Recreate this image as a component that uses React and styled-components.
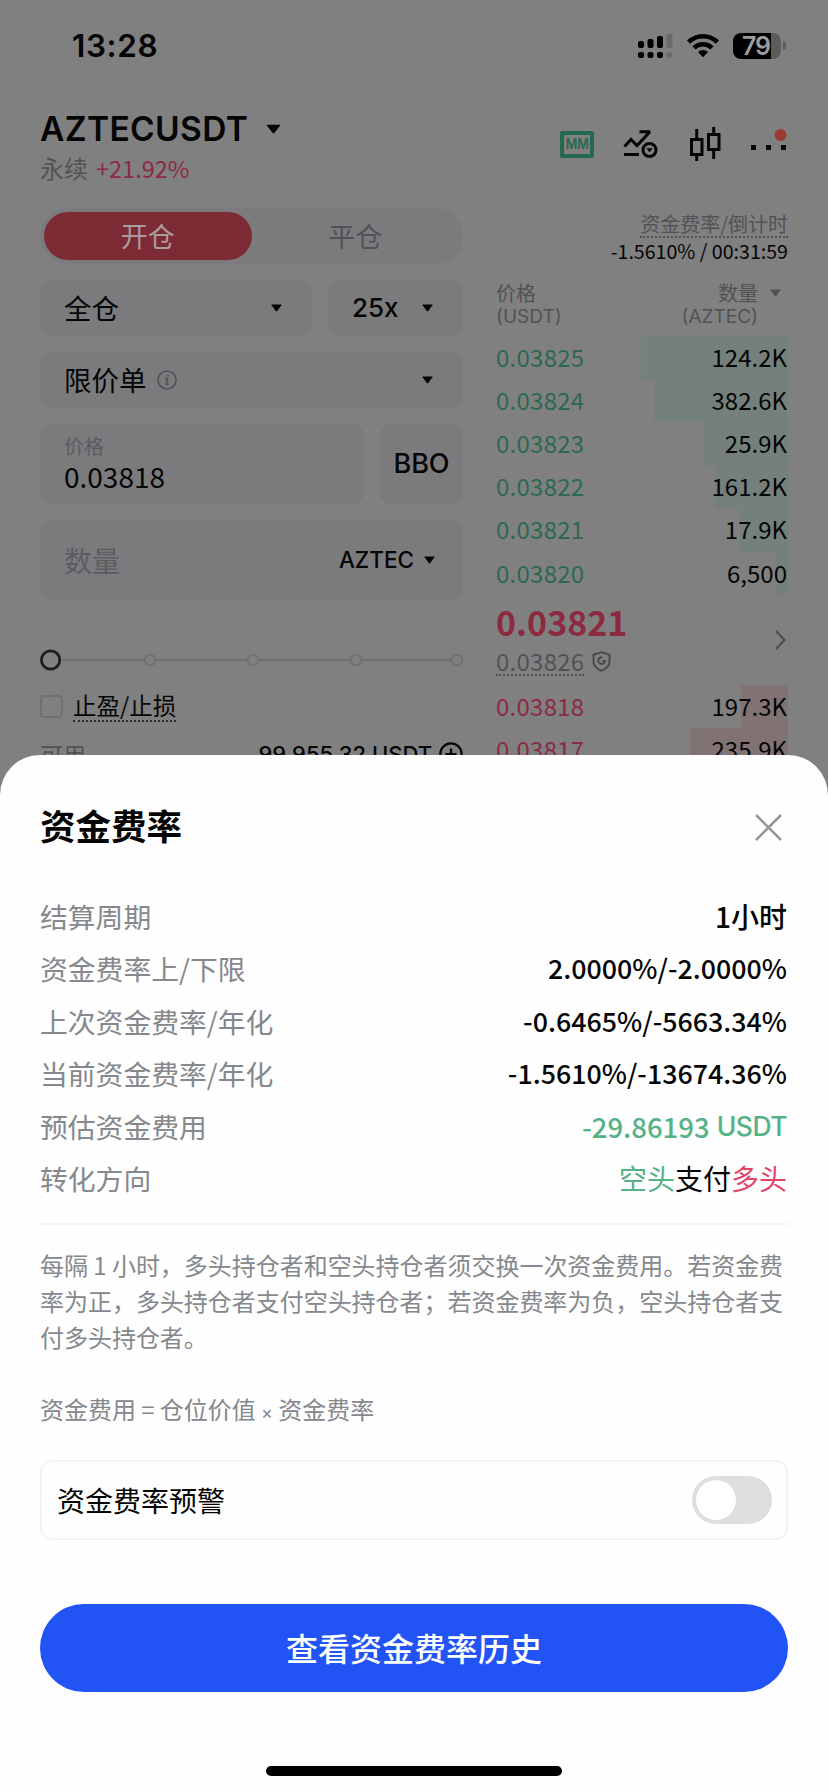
import React from 'react';
import styled, { createGlobalStyle } from 'styled-components';

const c = {
  bg: '#808080',
  field: '#7b7b7e',
  ink: '#050505',
  muted: '#505356',
  faint: '#5a5d60',
  line: '#717171',
  green: '#2c6950',
  red: '#8c2a42',
  buyBar: '#75807c',
  sellBar: '#817274',
  label: '#85888c',
};

const cjk = '"Noto Sans CJK SC", sans-serif';
const latin = 'Inter, "Noto Sans CJK SC", sans-serif';

const Global = createGlobalStyle`
  * { box-sizing: border-box; }
  body { margin: 0; background: ${c.bg}; font-family: ${cjk}; color: ${c.ink}; }
  svg { display: block; flex: none; }
`;

const Screen = styled.div`
  position: relative;
  width: 828px;
  height: 1792px;
  overflow: hidden;
  background: ${c.bg};
`;

const Text = styled.span`
  margin-top: ${(p) => -(p.$up || 0)}px;
  font-family: ${(p) => (p.$latin ? latin : cjk)};
  font-size: ${(p) => p.$size || 24}px;
  line-height: ${(p) => p.$lh || 30}px;
  font-weight: ${(p) => p.$weight || 400};
  color: ${(p) => p.$color || c.ink};
  letter-spacing: ${(p) => p.$track || 0}px;
  white-space: nowrap;
`;

const Row = styled.div`
  display: flex;
  align-items: center;
  justify-content: ${(p) => (p.$between ? 'space-between' : 'flex-start')};
  gap: ${(p) => p.$gap || 0}px;
`;

const StatusBar = styled.div`
  display: flex;
  align-items: center;
  justify-content: space-between;
  height: 91px;
  padding: 0 42px 0 72px;
`;

const StatusIcons = styled.div`
  display: flex;
  align-items: center;
  gap: 14px;
`;

const Header = styled.header`
  display: flex;
  justify-content: space-between;
  height: 117px;
  padding: 18px 40px 0;
`;

const Pair = styled.div`
  display: flex;
  flex-direction: column;
  gap: 3px;
`;

const Tools = styled.div`
  display: flex;
  align-items: center;
  height: 70px;
`;

const Tool = styled.div`
  margin-left: ${(p) => p.$left || 0}px;
`;

const Trade = styled.main`
  display: grid;
  grid-template-columns: 423px 292px;
  column-gap: 33px;
  padding-left: 40px;
`;

const Form = styled.section`
  display: flex;
  flex-direction: column;
  gap: 16px;
`;

const Segment = styled.div`
  display: flex;
  height: 56px;
  padding: 4px;
  border-radius: 28px;
  background: ${c.field};
`;

const SegmentItem = styled.div`
  flex: 1;
  display: flex;
  align-items: center;
  justify-content: center;
  padding-bottom: 2px;
  border-radius: 24px;
  font-size: 27px;
  color: ${(p) => (p.$on ? '#ab9c9d' : c.muted)};
  background: ${(p) => (p.$on ? '#7c2b35' : 'transparent')};
`;

const Field = styled.div`
  display: flex;
  align-items: center;
  justify-content: ${(p) => (p.$center ? 'center' : 'space-between')};
  width: ${(p) => (p.$w ? `${p.$w}px` : 'auto')};
  height: ${(p) => p.$h || 56}px;
  padding: 0 ${(p) => (p.$center ? 0 : p.$right || 30)}px 0 ${(p) => (p.$center ? 0 : 24)}px;
  border-radius: 10px;
  background: ${c.field};
`;

const Stack = styled.div`
  display: flex;
  flex-direction: column;
  gap: ${(p) => p.$gap || 0}px;
  padding-bottom: ${(p) => p.$bottom || 0}px;
  align-items: ${(p) => (p.$end ? 'flex-end' : 'flex-start')};
`;

const SliderRow = styled.div`
  height: 24px;
  margin-top: 32px;
`;

const Options = styled.div`
  display: flex;
  flex-direction: column;
  gap: 17px;
  margin-top: 2px;
`;

const Checkbox = styled.span`
  width: 23px;
  height: 23px;
  border: 2px solid #707070;
  border-radius: 4px;
`;

const Dotted = styled(Text)`
  border-bottom: 2px dotted ${(p) => p.$color || '#2c2c2c'};
`;

const Book = styled.section`
  display: flex;
  flex-direction: column;
`;

const Funding = styled.div`
  display: flex;
  flex-direction: column;
  align-items: flex-end;
  height: 72px;
  padding-top: 4px;
`;

const BookHead = styled.div`
  display: flex;
  justify-content: space-between;
  align-items: flex-start;
  height: 56px;
  padding-right: 7px;
`;

const SizeHead = styled.div`
  display: grid;
  grid-template-columns: auto 11px;
  column-gap: 12px;
  align-items: center;
  justify-items: end;
`;

const Level = styled.div`
  display: flex;
  align-items: center;
  justify-content: space-between;
  height: 43.2px;
  padding: 0 1px 2px 0;
  background: linear-gradient(${(p) => p.$bar}, ${(p) => p.$bar}) right / ${(p) => p.$depth}px 100% no-repeat;
`;

const Mid = styled.div`
  display: flex;
  align-items: center;
  justify-content: space-between;
  height: 90px;
  padding-right: 2px;
`;

const Sheet = styled.section`
  position: absolute;
  left: 0;
  right: 0;
  bottom: 0;
  height: 1037px;
  padding: 48px 40px 0;
  border-radius: 40px 40px 0 0;
  background: #fefefe;
  display: flex;
  flex-direction: column;
`;

const SheetHead = styled.div`
  display: flex;
  align-items: center;
  justify-content: space-between;
  height: 48px;
  padding-right: 6px;
`;

const Details = styled.div`
  margin-top: 40px;
  padding: 0 1px 17px 0;
  border-bottom: 2px solid #f3f3f4;
`;

const Detail = styled.div`
  display: flex;
  align-items: center;
  justify-content: space-between;
  height: 52.5px;
  padding-bottom: 3px;
`;

const Note = styled.p`
  margin: ${(p) => p.$top}px 0 0;
  font-size: 24px;
  line-height: 36px;
  letter-spacing: -0.03px;
  color: ${c.label};
`;

const Times = styled.span`
  font: 400 18px/20px ${latin};
`;

const AlertCard = styled.div`
  display: flex;
  align-items: center;
  justify-content: space-between;
  height: 80px;
  margin-top: 33px;
  padding: 0 14px 0 15px;
  border: 2px solid #f3f3f4;
  border-radius: 12px;
`;

const Switch = styled.div`
  display: flex;
  align-items: center;
  width: 80px;
  height: 48px;
  padding: 4px;
  border-radius: 24px;
  background: #dcdee0;
`;

const Thumb = styled.span`
  width: 40px;
  height: 40px;
  border-radius: 50%;
  background: #fff;
`;

const Primary = styled.button`
  height: 88px;
  margin-top: 64px;
  padding: 0 0 3px;
  border: 0;
  border-radius: 44px;
  background: #2254f5;
  color: #fff;
  font: 500 32px/48px ${cjk};
`;

const HomeBar = styled.div`
  align-self: center;
  width: 296px;
  height: 10px;
  margin-top: 74px;
  border-radius: 5px;
  background: #000;
`;

const Caret = ({ w = 11, h = 8, color = c.ink }) => (
  <svg width={w} height={h} viewBox="0 0 11 8" preserveAspectRatio="none">
    <path d="M1 .5h9q.8 0 .4.7L6.2 7q-.7.8-1.4 0L.6 1.2Q.2.5 1 .5z" fill={color} />
  </svg>
);

const Signal = () => (
  <svg width="35" height="26" viewBox="0 0 35 26">
    {[[0, 8, 7], [9.5, 6, 9], [19, 3, 12], [28.5, 1, 14]].map(([x, y, h], i) => (
      <g key={x} fill={i === 3 ? '#6a6a6a' : '#000'}>
        <rect x={x} y={y} width="6" height={h} rx="2" />
        <rect x={x} y="19" width="6" height="6" rx={i === 3 ? 3 : 2} />
      </g>
    ))}
  </svg>
);

const Wifi = () => (
  <svg width="32" height="25" viewBox="0 0 32 25">
    <g fill="none" stroke="#000" strokeWidth="4.6">
      <path d="M1.6 9.2a20.5 20.5 0 0 1 28.8 0" />
      <path d="M7 14.9a12.8 12.8 0 0 1 18 0" />
    </g>
    <path d="M16 24.3l-5-5.2a7.3 7.3 0 0 1 10 0z" />
  </svg>
);

const BatteryBox = styled.div`
  display: flex;
  align-items: center;
  gap: 2px;
`;

const BatteryBody = styled.div`
  width: 48px;
  height: 26px;
  border-radius: 8px;
  padding-left: 9px;
  background: linear-gradient(90deg, #000 38.5px, #5c5c5c 38.5px);
  color: #9c9c9c;
  font: 600 25px/26px ${latin};
  letter-spacing: -1.2px;
`;

const BatteryNub = styled.span`
  width: 3px;
  height: 9px;
  border-radius: 0 3px 3px 0;
  background: #5c5c5c;
`;

const MakerBadge = styled.div`
  display: flex;
  align-items: center;
  justify-content: center;
  width: 34px;
  height: 27px;
  border: 4px solid #256a4e;
  border-radius: 2px;
  color: #256a4e;
  font: 600 14.5px/18px ${latin};
`;

const BadgeText = styled.span`
  transform: scaleX(0.86);
`;

const Trend = () => (
  <svg width="35" height="30" viewBox="0 0 35 30" fill="none" stroke="#050505" strokeWidth="3">
    <path d="M1.500 17.500l6.500-7 6 6L27 2.800M16.500 2.800h10.700M1 25.500h15" />
    <circle cx="26.500" cy="21" r="6.500" />
    <path d="M23.200 19.200h6.600l-3.300 4z" fill="#050505" stroke="none" />
  </svg>
);

const Candles = () => (
  <svg width="32" height="34" viewBox="0 0 32 34" fill="none" stroke="#050505" strokeWidth="3">
    <rect x="2.500" y="12.500" width="10.500" height="15" />
    <rect x="19.500" y="7.500" width="10.500" height="15" />
    <path d="M7.700 2v10M7.700 28v6M24.700 0v7M24.700 23v9" />
  </svg>
);

const More = () => (
  <svg width="38" height="34" viewBox="0 0 38 34">
    <path d="M1 18h5v5H1zM16 18h5v5h-5zM31 18h5v5h-5z" fill="#050505" />
    <circle cx="30.500" cy="8" r="6" fill="#993a30" />
  </svg>
);

const Info = () => (
  <svg width="20" height="20" viewBox="0 0 20 20" fill="none" stroke={c.muted} strokeWidth="1.600">
    <circle cx="10" cy="10" r="9" />
    <path d="M8 8.600h2.600L9.200 14.400h2.200" />
    <circle cx="11" cy="5.600" r=".7" fill={c.muted} stroke={c.muted} strokeWidth=".8" />
  </svg>
);

const Shield = () => (
  <svg width="19" height="21" viewBox="0 0 19 21" fill="none" stroke="#464a4e" strokeWidth="1.900">
    <path d="M9.500 1.200l8 2.600v7c0 4-3.500 7-8 9-4.500-2-8-5-8-9v-7z" />
    <path d="M10.200 6.300a3.300 3.300 0 1 0 2.700 3.600h-2.600" />
  </svg>
);

const Slider = () => (
  <svg width="423" height="24" viewBox="0 0 423 24">
    <path d="M22 12h390" stroke={c.line} strokeWidth="2.500" />
    {[110, 213, 316, 417].map((x) => (
      <circle key={x} cx={x} cy="12" r="5.300" fill="#808080" stroke={c.line} strokeWidth="2" />
    ))}
    <circle cx="10.600" cy="12" r="9.200" fill="#808080" stroke="#1c1c1c" strokeWidth="2.700" />
  </svg>
);

const PlusCircle = () => (
  <svg width="24" height="24" viewBox="0 0 24 24" fill="none" stroke="#050505" strokeWidth="2.200">
    <circle cx="12" cy="12" r="10.700" />
    <path d="M12 6.500v11M6.500 12h11" />
  </svg>
);

const Chevron = () => (
  <svg width="11" height="20" viewBox="0 0 11 20" fill="none" stroke="#4b4b4b" strokeWidth="2">
    <path d="M1 1l8.500 9L1 19" />
  </svg>
);

const Close = () => (
  <svg width="27" height="27" viewBox="0 0 27 27" fill="none" stroke="#969696" strokeWidth="2.500">
    <path d="M1 1l25 25M26 1L1 26" />
  </svg>
);

const bids = [
  ['0.03825', '124.2K', 147],
  ['0.03824', '382.6K', 134],
  ['0.03823', '25.9K', 84],
  ['0.03822', '161.2K', 73],
  ['0.03821', '17.9K', 48],
  ['0.03820', '6,500', 13],
];
const asks = [
  ['0.03818', '197.3K', 47],
  ['0.03817', '235.9K', 98],
];

const Levels = ({ rows, color, bar }) =>
  rows.map(([price, size, depth]) => (
    <Level key={price} $bar={bar} $depth={depth}>
      <Text $color={color} $track={0.25}>{price}</Text>
      <Text>{size}</Text>
    </Level>
  ));

const Value = ({ children, ...rest }) => (
  <Text $size={26.800} $lh={40} $weight={500} {...rest}>{children}</Text>
);

const details = [
  ['结算周期', <Value $size={28}>1小时</Value>],
  ['资金费率上/下限', <Value>2.0000%/-2.0000%</Value>],
  ['上次资金费率/年化', <Value>-0.6465%/-5663.34%</Value>],
  ['当前资金费率/年化', <Value>-1.5610%/-13674.36%</Value>],
  ['预估资金费用', (
    <Row $gap={7}>
      <Value $size={27.500} $color="#55b287">-29.86193</Value>
      <Value $latin $size={26.500} $color="#55b287" $track={-0.5}>USDT</Value>
    </Row>
  )],
  ['转化方向', (
    <Row>
      <Value $size={28} $weight={400} $color="#55b287">空头</Value>
      <Value $size={28} $weight={400}>支付</Value>
      <Value $size={28} $weight={400} $color="#e0456a">多头</Value>
    </Row>
  )],
];

export default function App() {
  return (
    <Screen>
      <Global />
      <StatusBar>
        <Text $latin $size={31.500} $weight={600} $lh={38} $track={0.600}>13:28</Text>
        <StatusIcons>
          <Signal />
          <Wifi />
          <BatteryBox>
            <BatteryBody>79</BatteryBody>
            <BatteryNub />
          </BatteryBox>
        </StatusIcons>
      </StatusBar>

      <Header>
        <Pair>
          <Row $gap={18}>
            <Text $latin $size={33.500} $weight={600} $lh={40} $track={0.350}>AZTECUSDT</Text>
            <Caret w={15} h={10} />
          </Row>
          <Row $gap={8}>
            <Text $color={c.muted} $lh={32}>永续</Text>
            <Text $color={c.red} $size={23.500} $lh={32}>+21.92%</Text>
          </Row>
        </Pair>
        <Tools>
          <MakerBadge><BadgeText>MM</BadgeText></MakerBadge>
          <Tool $left={29}><Trend /></Tool>
          <Tool $left={31}><Candles /></Tool>
          <Tool $left={29}><More /></Tool>
        </Tools>
      </Header>

      <Trade>
        <Form>
          <Segment>
            <SegmentItem $on>开仓</SegmentItem>
            <SegmentItem>平仓</SegmentItem>
          </Segment>
          <Row $gap={16}>
            <Field $w={272}>
              <Text $size={27.500} $up={3}>全仓</Text>
              <Caret />
            </Field>
            <Field $w={135}>
              <Text $latin $size={26} $weight={500}>25x</Text>
              <Caret />
            </Field>
          </Row>
          <Field>
            <Row $gap={10}>
              <Text $size={27.500} $up={3}>限价单</Text>
              <Info />
            </Row>
            <Caret />
          </Field>
          <Row $gap={16}>
            <Field $w={324} $h={80}>
              <Stack $bottom={2}>
                <Text $size={20} $color={c.faint} $lh={26}>价格</Text>
                <Text $size={28} $lh={34}>0.03818</Text>
              </Stack>
            </Field>
            <Field $w={83} $h={80} $center>
              <Text $latin $size={27} $weight={500}>BBO</Text>
            </Field>
          </Row>
          <Field $h={80} $right={28}>
            <Text $size={28} $color={c.faint} $up={1}>数量</Text>
            <Row $gap={10}>
              <Text $latin $size={22.500} $weight={500}>AZTEC</Text>
              <Caret />
            </Row>
          </Field>
          <SliderRow><Slider /></SliderRow>
          <Options>
            <Row $gap={10}>
              <Checkbox />
              <Dotted $size={23.500}>止盈/止损</Dotted>
            </Row>
            <Row $between>
              <Text $color={c.muted} $size={23}>可用</Text>
              <Row $gap={7}>
                <Text $latin $size={22} $weight={500}>99,955.32 USDT</Text>
                <PlusCircle />
              </Row>
            </Row>
          </Options>
        </Form>

        <Book>
          <Funding>
            <Dotted $size={20} $lh={24} $color={c.muted}>资金费率/倒计时</Dotted>
            <Text $size={19.600} $lh={26}>-1.5610% / 00:31:59</Text>
          </Funding>
          <BookHead>
            <Stack>
              <Text $size={20} $lh={25} $color={c.muted}>价格</Text>
              <Text $latin $size={19} $lh={24} $color={c.muted}>(USDT)</Text>
            </Stack>
            <SizeHead>
              <Text $size={20} $lh={25} $color={c.muted}>数量</Text>
              <Caret color={c.muted} />
              <Text $latin $size={19} $lh={24} $color={c.muted}>(AZTEC)</Text>
            </SizeHead>
          </BookHead>
          <Levels rows={bids} color={c.green} bar={c.buyBar} />
          <Mid>
            <Stack $gap={3} $bottom={4}>
              <Text $size={34} $weight={700} $lh={44} $color={c.red}>0.03821</Text>
              <Row $gap={8}>
                <Dotted $color={c.muted} $lh={27} $track={0.250}>0.03826</Dotted>
                <Shield />
              </Row>
            </Stack>
            <Chevron />
          </Mid>
          <Levels rows={asks} color={c.red} bar={c.sellBar} />
        </Book>
      </Trade>

      <Sheet>
        <SheetHead>
          <Text $size={35.500} $weight={700} $lh={48} $up={4}>资金费率</Text>
          <Close />
        </SheetHead>
        <Details>
          {details.map(([label, value]) => (
            <Detail key={label}>
              <Text $size={27.800} $lh={40} $color={c.label}>{label}</Text>
              {value}
            </Detail>
          ))}
        </Details>
        <Note $top={22}>
          每隔 1 小时，多头持仓者和空头持仓者须交换一次资金费用。若资金费率为正，多头持仓者支付空头持仓者；若资金费率为负，空头持仓者支付多头持仓者。
        </Note>
        <Note $top={36}>资金费用 = 仓位价值 <Times>×</Times> 资金费率</Note>
        <AlertCard>
          <Text $size={28} $lh={40}>资金费率预警</Text>
          <Switch><Thumb /></Switch>
        </AlertCard>
        <Primary>查看资金费率历史</Primary>
        <HomeBar />
      </Sheet>
    </Screen>
  );
}
